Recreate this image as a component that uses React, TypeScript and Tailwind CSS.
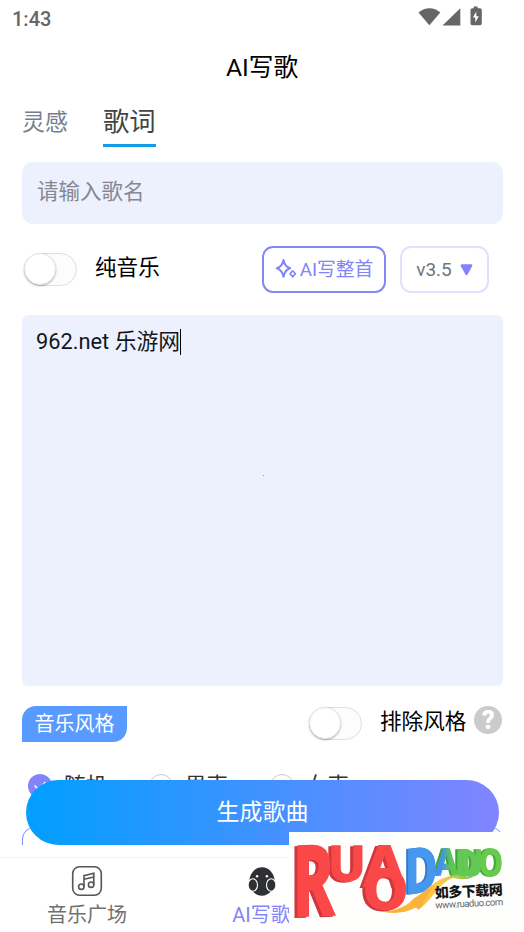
import clsx from "clsx";

function Toggle() {
  return (
    <div className="w-[53px] h-[33px] rounded-full border border-[#dedede] bg-[#fcfcfc] shrink-0">
      <div className="w-8 h-8 -mt-px -ml-px rounded-full bg-white border border-[#e6e6e6] shadow-[0_1px_2px_rgba(0,0,0,0.28)]" />
    </div>
  );
}

function StatusBar() {
  return (
    <div className="h-9 shrink-0 flex items-center justify-between pl-3 pr-10 text-[#666]">
      <span className="mt-0.5 text-[20px] font-medium leading-5">1:43</span>
      <svg width="66" height="22" viewBox="0 0 66 22" fill="#666" className="-mt-0.5">
        <path d="M0.5 6.5C7 .8 16 .8 22.3 6.5L11.4 19.3z" />
        <path d="M24.5 19.5L42.3 2.2V19.5z" />
        <path d="M55.7 0.5h3.9v1.8h2.3q1.9 0 1.9 1.8v13.3q0 1.8-1.8 1.8h-7.7q-1.8 0-1.8-1.8V4.1q0-1.8 1.8-1.8h1.4z" />
        <path d="M58.3 5.5l-3.4 6h2.4v5l3.5-6.2h-2.5z" fill="#fff" />
      </svg>
    </div>
  );
}

const voices = [
  { label: "随机", checked: true },
  { label: "男声", checked: false },
  { label: "女声", checked: false },
];

function VoiceOption({ label, checked }: { label: string; checked: boolean }) {
  return (
    <div className="w-[121px] flex items-center gap-3 text-[21.5px] leading-6 text-[#333]">
      <div
        className={clsx(
          "w-6 h-6 rounded-full flex items-center justify-center",
          checked ? "bg-[#8184fb]" : "border border-[#c8c8c8] bg-white"
        )}
      >
        {checked && (
          <svg width="14" height="12" viewBox="0 0 14 12" fill="none" stroke="#fff" strokeWidth="1.6">
            <path d="M1.5 5.5L5.5 9.5L12.5 2" />
          </svg>
        )}
      </div>
      <span>{label}</span>
    </div>
  );
}

type LetterProps = {
  char: string;
  x: number;
  y: number;
  sx: number;
  sy: number;
  skew?: number;
  fill: string;
};

function Letter({ char, x, y, sx, sy, skew = 0, fill }: LetterProps) {
  return (
    <text
      transform={`translate(${x} ${y}) skewY(${skew}) scale(${sx} ${sy})`}
      fontSize="10"
      fontWeight="700"
      fontFamily='"Open Sans", Roboto, sans-serif'
      fill={fill}
      stroke={fill}
      strokeWidth="0.35"
    >
      {char}
    </text>
  );
}

// The drop shadows give the block letters their side faces
function RuaduoLogo() {
  return (
    <svg width="235" height="100" viewBox="0 0 235 100" className="block">
      <defs>
        <linearGradient id="blueGreen">
          <stop offset="0.3" stopColor="#4593e8" />
          <stop offset="0.7" stopColor="#5fc64e" />
        </linearGradient>
        <linearGradient id="swoosh">
          <stop offset="0" stopColor="#f8a928" />
          <stop offset="0.65" stopColor="#ffc84c" />
          <stop offset="1" stopColor="#75c84b" />
        </linearGradient>
      </defs>
      <g className="[filter:drop-shadow(-1.5px_0.5px_0_#3fa238)]">
        <Letter char="A" x={146} y={42.5} sx={3.3} sy={3.6} fill="url(#blueGreen)" />
        <Letter char="D" x={166} y={43.5} sx={3.2} sy={3.6} fill="#62c954" />
        <Letter char="U" x={172} y={43.5} sx={2.9} sy={3.6} fill="#62c954" />
        <Letter char="O" x={190} y={44} sx={3} sy={3.7} fill="#66cb4c" />
      </g>
      <g className="[filter:drop-shadow(-2px_0.5px_0_#2f7ccb)]">
        <Letter char="D" x={116} y={62} sx={4.4} sy={6.1} skew={-7} fill="#4598ee" />
      </g>
      <path d="M91 79C112 81 124 68 138 57Q154 43 168 43Q174 45 184 45Q176 49 165 46C155 46 144 66 132 76L126 76Q110 84 91 79z" fill="url(#swoosh)" />
      <path d="M121 70l9 8 14-24-20 13z" fill="#f8b33a" />
      <g className="[filter:drop-shadow(-2.5px_1px_0_#d0363b)]">
        <Letter char="U" x={39} y={49} sx={5} sy={4.8} fill="#fa4848" />
        <Letter char="A" x={75} y={54} sx={5.9} sy={5.5} fill="#fa4848" />
        <Letter char="O" x={74} y={77} sx={5.7} sy={5.4} fill="#fa4848" />
        <Letter char="R" x={4} y={83.5} sx={6.2} sy={9.6} skew={-2} fill="#fa4848" />
      </g>
      <g transform="rotate(-3 147 66)" fontFamily='Roboto, "Noto Sans CJK SC", sans-serif'>
        <text x="146" y="66" fontSize="14" fontWeight="900" textLength="68" fill="#161616">
          如多下载网
        </text>
        <text x="146" y="76.5" fontSize="9.6" textLength="68" fill="#666">
          www.ruaduo.com
        </text>
      </g>
    </svg>
  );
}

function BottomNav() {
  return (
    <nav className="h-[75px] shrink-0 border-t border-[#f3f3f3] bg-white flex text-[20px] leading-6">
      <div className="w-[174px] flex flex-col items-center pt-[7px] text-[#707070]">
        <svg width="32" height="32" viewBox="0 0 32 32" fill="none" stroke="#555" strokeWidth="1.6">
          <rect x="1.7" y="1.7" width="28.6" height="28.6" rx="7" />
          <circle cx="10.3" cy="21.7" r="2.7" />
          <circle cx="20.1" cy="19.7" r="2.7" />
          <path d="M13 21.7V10.7L22.8 8.3V19.7M13 14.2L22.8 12" />
        </svg>
        <span className="mt-1.5">音乐广场</span>
      </div>
      <div className="w-[175px] flex flex-col items-center pt-[7px] text-[#8184fb]">
        <svg width="32" height="32" viewBox="0 0 32 32">
          <ellipse cx="16" cy="16.5" rx="12.6" ry="14.2" fill="#2f3033" />
          <g fill="#2f3033" stroke="#fff" strokeWidth="1.1">
            <ellipse cx="6.8" cy="20" rx="4.7" ry="6.2" />
            <ellipse cx="25.2" cy="20" rx="4.7" ry="6.2" />
          </g>
          <circle cx="11.1" cy="11.3" r="1.2" fill="#fff" />
          <circle cx="20.9" cy="11.3" r="1.2" fill="#fff" />
        </svg>
        <span className="mt-1.5">AI写歌</span>
      </div>
    </nav>
  );
}

export default function App() {
  return (
    <div className="relative w-[524px] h-[932px] overflow-hidden bg-white flex flex-col font-[Roboto,'Noto_Sans_CJK_SC',sans-serif]">
      <StatusBar />
      <h1 className="h-[62px] shrink-0 pt-px text-center text-[24.7px] leading-[62px] text-black">AI写歌</h1>

      <div className="h-[64px] shrink-0 flex pl-[22px] gap-[35px]">
        <div className="text-[23px] leading-[50px] text-[#748092]">灵感</div>
        <div className="h-[49px] border-b-[3px] border-[#159ce8] text-[26.3px] leading-[48px] text-[#444]">歌词</div>
      </div>

      <main className="h-[683px] shrink-0 overflow-hidden pl-[22px] pr-[21px]">
        <div className="h-[62px] rounded-[11px] bg-[#edf1fe] px-[15px] text-[21.5px] leading-[60px] text-[#858890]">
          请输入歌名
        </div>

        <div className="h-[91px] flex items-center">
          <div className="pl-[2px]">
            <Toggle />
          </div>
          <span className="ml-[18px] mb-0.5 text-[21.6px] text-black">纯音乐</span>
          <button className="ml-auto h-[47px] w-[124px] rounded-[11px] border-2 border-[#8587f3] flex items-center justify-center gap-[3px] text-[18.8px] text-[#8184fb]">
            <svg width="22" height="22" viewBox="0 0 22 22" fill="none" stroke="#8184fb" strokeWidth="2" strokeLinejoin="round" className="-mt-0.5">
              <path d="M8.5 2Q9.8 8.7 15.2 10.3Q9.8 12 8.5 18.8Q7.2 12 1.8 10.3Q7.2 8.7 8.5 2z" />
              <path d="M17.7 12.8l2.7 3-2.7 3-2.7-3z" strokeWidth="1.7" />
            </svg>
            <span className="mt-0.5">AI写整首</span>
          </button>
          <button className="ml-[14px] mr-[14px] h-[47px] w-[89px] rounded-[11px] border-2 border-[#e4dffc] flex items-center justify-center gap-2 text-[19px] text-[#707580]">
            <span className="mt-px">v3.5</span>
            <svg width="13" height="12" viewBox="0 0 13 12" className="mt-px">
              <path d="M1.8 1.5h9.4L6.5 10z" fill="#8184fb" stroke="#8184fb" strokeWidth="2.4" strokeLinejoin="round" />
            </svg>
          </button>
        </div>

        <div className="h-[371px] rounded-md bg-[#edf1fe] px-[14px] pt-[14px] text-[21.8px] leading-[26px] text-[#111722]">
          <div className="flex items-center">
            962.net 乐游网
            <span className="w-px h-[26px] bg-black" />
          </div>
          <div className="mt-[120px] ml-[227px] size-px bg-[#5cc27c]" />
        </div>

        <div className="h-[88px] flex items-start pt-[20px]">
          <div className="h-9 w-[105px] shrink-0 rounded-tl-[14px] rounded-br-[14px] bg-[#589aff] text-center text-[20px] leading-9 text-white">
            音乐风格
          </div>
          <div className="ml-[182px] mt-px">
            <Toggle />
          </div>
          <span className="ml-[18px] text-[21.6px] leading-8 text-black whitespace-nowrap">排除风格</span>
          <div className="ml-2 size-7 shrink-0 rounded-full bg-[#cbcbcb] text-white text-center text-[25px] font-black leading-[30px]">
            ?
          </div>
        </div>

        <div className="flex pl-[6px]">
          {voices.map((voice) => (
            <VoiceOption key={voice.label} {...voice} />
          ))}
        </div>
        <div className="mt-[29px] h-[60px] rounded-xl border border-[#8184fb]" />
      </main>

      <div className="h-[12px] shrink-0" />
      <BottomNav />

      <button className="absolute left-[26px] top-[780px] w-[473px] h-[65px] pt-0.5 rounded-full bg-[linear-gradient(90deg,#009fff,#8184ff)] text-[23px] text-white">
        生成歌曲
      </button>
      <div className="absolute left-[289px] top-[832px] bg-[#fefefd]">
        <RuaduoLogo />
      </div>
    </div>
  );
}
